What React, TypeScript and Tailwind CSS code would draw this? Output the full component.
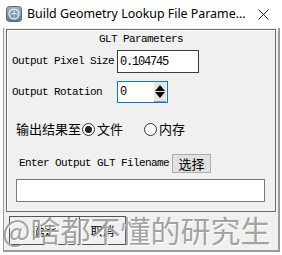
import React from "react";

const mono = { fontFamily: '"Liberation Mono", "Courier New", monospace' };
const cjk = { fontFamily: '"Microsoft YaHei", "Noto Sans CJK SC", sans-serif' };

const AppIcon = () => (
  <svg width="16" height="16" viewBox="0 0 16 16">
    <defs>
      <linearGradient id="ig" x1="0" y1="0" x2="0" y2="1">
        <stop offset="0" stopColor="#9fb4c8" />
        <stop offset="1" stopColor="#5f7890" />
      </linearGradient>
    </defs>
    <rect x="0.5" y="0.5" width="15" height="15" rx="3" fill="url(#ig)" stroke="#5a6b7c" />
    <circle cx="8" cy="8" r="5" fill="none" stroke="#eef3f8" strokeWidth="1.2" />
    <path d="M3.5 9.5 Q8 5 12.5 9.5" fill="none" stroke="#eef3f8" strokeWidth="1" />
    <path d="M8 3 L8 13" fill="none" stroke="#dfe8f0" strokeWidth="0.8" />
  </svg>
);

const Radio = ({ checked }: { checked?: boolean }) => (
  <span className="w-[13px] h-[13px] rounded-full border border-[#333] bg-white flex items-center justify-center">
    {checked && <span className="w-[7px] h-[7px] rounded-full bg-[#222]" />}
  </span>
);

export default function App() {
  return (
    <div className="relative w-[282px] h-[255px] bg-white overflow-hidden text-black">
      {/* title bar */}
      <div className="h-[28px] flex items-center pl-[6px] pr-[13px]">
        <AppIcon />
        <span
          className="ml-[5px] text-[12.4px] text-black flex-1 whitespace-nowrap"
          style={{ fontFamily: '"Segoe UI", "Noto Sans", sans-serif' }}
        >
          Build Geometry Lookup File Parame...
        </span>
        <svg width="11" height="11" viewBox="0 0 11 11">
          <path d="M0.5 0.5 L10.5 10.5 M10.5 0.5 L0.5 10.5" stroke="#222" strokeWidth="1" />
        </svg>
      </div>

      {/* window body */}
      <div className="ml-[3px] w-[277px] h-[224px] bg-[#f0f0f0] border-l border-r-2 border-b-2 border-[#9a9a9a] pt-[1px]">
        <div className="mx-[2px] h-[183px] border border-[#6e6e6e] shadow-[inset_1px_1px_0_#ffffff] flex flex-col">
          <div className="mt-[2px] h-[14px] flex items-center justify-center text-[11px] tracking-[-0.6px]" style={mono}>
            GLT Parameters
          </div>

          <div className="mt-[4px] flex items-center pl-[5px]">
            <span className="w-[105px] text-[11px] tracking-[-0.6px] whitespace-nowrap" style={mono}>
              Output Pixel Size
            </span>
            <div
              className="w-[82px] h-[23px] bg-white border border-[#3c3c3c] flex items-center pl-[2px] text-[12px] tracking-[-1.2px]"
              style={mono}
            >
              0.104745
            </div>
          </div>

          <div className="mt-[8px] flex items-center pl-[5px]">
            <span className="w-[105px] text-[11px] tracking-[-0.6px] whitespace-nowrap" style={mono}>
              Output Rotation
            </span>
            <div className="w-[51px] h-[22px] bg-white border border-[#0078d7] flex items-center">
              <span className="flex-1 pl-[2px] text-[12px]" style={mono}>
                0
              </span>
              <div className="w-[12px] h-[20px] mr-[1px] bg-[#e6e6e6] border-b border-[#9a9a9a] flex flex-col items-center justify-center gap-[1px]">
                <svg width="10" height="6" viewBox="0 0 10 6">
                  <path d="M5 0 L10 6 L0 6 Z" fill="#000" />
                </svg>
                <svg width="10" height="6" viewBox="0 0 10 6">
                  <path d="M0 0 L10 0 L5 6 Z" fill="#000" />
                </svg>
              </div>
            </div>
          </div>

          <div className="mt-[18px] h-[16px] flex items-center pl-[9px] text-[13px]" style={cjk}>
            <span>输出结果至</span>
            <span className="ml-[1px]">
              <Radio checked />
            </span>
            <span className="ml-[2px]">文件</span>
            <span className="ml-[21px]">
              <Radio />
            </span>
            <span className="ml-[2px]">内存</span>
          </div>

          <div className="mt-[17px] flex items-center pl-[12px]">
            <span className="w-[153px] text-[11px] tracking-[-0.6px] whitespace-nowrap" style={mono}>
              Enter Output GLT Filename
            </span>
            <div
              className="w-[39px] h-[19px] bg-[#e1e1e1] border border-[#adadad] flex items-center justify-center text-[13px]"
              style={cjk}
            >
              选择
            </div>
          </div>

          <div className="mt-[6px] ml-[9px] w-[249px] h-[23px] bg-white border border-[#7a7a7a]" />
        </div>

        {/* bottom buttons */}
        <div className="mt-[4px] ml-[5px] flex text-[12px]" style={cjk}>
          <div className="w-[71px] h-[29px] border border-[#555] flex items-center justify-center">确定</div>
          <div className="w-[46px] h-[29px] border border-l-0 border-[#555] flex items-center justify-center">取消</div>
        </div>
      </div>

      {/* watermark */}
      <div
        className="absolute left-[2px] top-[209px] text-[30px] leading-[40px] text-[#8c8c8c]/80 whitespace-nowrap pointer-events-none [text-shadow:1px_1px_0_#ffffff]"
        style={cjk}
      >
        @啥都不懂的研究生
      </div>
    </div>
  );
}
